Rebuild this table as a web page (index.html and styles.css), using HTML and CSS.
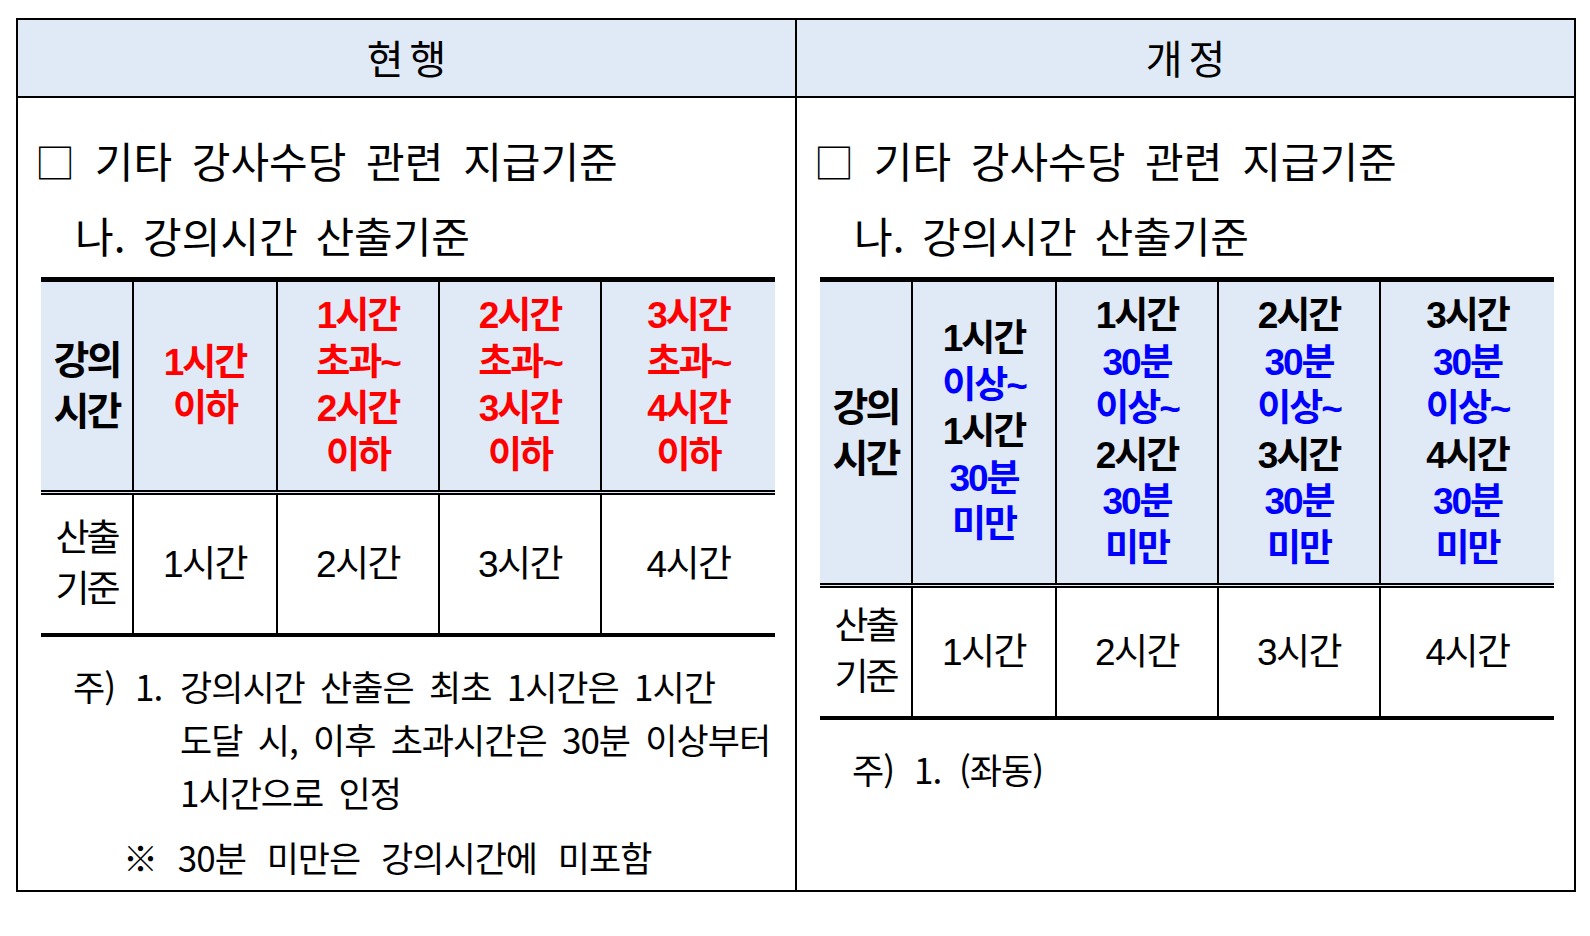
FILE: index.html
```html
<!DOCTYPE html>
<html lang="ko">
<head>
<meta charset="utf-8">
<title>강사수당 지급기준 비교</title>
<link rel="stylesheet" href="styles.css">
</head>
<body>
<div class="frame">
  <div class="head">현행</div>
  <div class="head">개정</div>

  <div class="panel">
    <div class="intro"><span class="box">□</span> 기타 강사수당 관련 지급기준</div>
    <div class="intro sub">나. 강의시간 산출기준</div>
    <table class="tbl">
      <colgroup><col class="c1"><col class="c2"><col class="c3"><col class="c4"><col class="c5"></colgroup>
      <tr class="hrow">
        <td class="lab"><div class="ln">강의</div><div class="ln">시간</div></td>
        <td class="red"><div class="ln">1시간</div><div class="ln">이하</div></td>
        <td class="red"><div class="ln">1시간</div><div class="ln">초과~</div><div class="ln">2시간</div><div class="ln">이하</div></td>
        <td class="red"><div class="ln">2시간</div><div class="ln">초과~</div><div class="ln">3시간</div><div class="ln">이하</div></td>
        <td class="red"><div class="ln">3시간</div><div class="ln">초과~</div><div class="ln">4시간</div><div class="ln">이하</div></td>
      </tr>
      <tr class="brow brow-l">
        <td class="lab2"><div class="ln">산출</div><div class="ln">기준</div></td>
        <td>1시간</td>
        <td>2시간</td>
        <td>3시간</td>
        <td>4시간</td>
      </tr>
    </table>
    <div class="note">
      <div class="note-line"><span class="nk">주)</span><span class="nn">1.</span><div class="nt"><div class="nl">강의시간 산출은 최초 1시간은 1시간</div><div class="nl">도달 시, 이후 초과시간은 30분 이상부터</div><div class="nl">1시간으로 인정</div></div></div>
      <div class="note-ref">※ 30분 미만은 강의시간에 미포함</div>
    </div>
  </div>

  <div class="panel">
    <div class="intro"><span class="box">□</span> 기타 강사수당 관련 지급기준</div>
    <div class="intro sub">나. 강의시간 산출기준</div>
    <table class="tbl">
      <colgroup><col class="c1"><col class="c2"><col class="c3"><col class="c4"><col class="c5"></colgroup>
      <tr class="hrow">
        <td class="lab"><div class="ln">강의</div><div class="ln">시간</div></td>
        <td><div class="ln">1시간</div><div class="ln blue">이상~</div><div class="ln">1시간</div><div class="ln blue">30분</div><div class="ln blue">미만</div></td>
        <td><div class="ln">1시간</div><div class="ln blue">30분</div><div class="ln blue">이상~</div><div class="ln">2시간</div><div class="ln blue">30분</div><div class="ln blue">미만</div></td>
        <td><div class="ln">2시간</div><div class="ln blue">30분</div><div class="ln blue">이상~</div><div class="ln">3시간</div><div class="ln blue">30분</div><div class="ln blue">미만</div></td>
        <td><div class="ln">3시간</div><div class="ln blue">30분</div><div class="ln blue">이상~</div><div class="ln">4시간</div><div class="ln blue">30분</div><div class="ln blue">미만</div></td>
      </tr>
      <tr class="brow brow-r">
        <td class="lab2"><div class="ln">산출</div><div class="ln">기준</div></td>
        <td>1시간</td>
        <td>2시간</td>
        <td>3시간</td>
        <td>4시간</td>
      </tr>
    </table>
    <div class="note">
      <div class="note-line"><span class="nk">주)</span><span class="nn">1.</span><div class="nt"><div class="nl">(좌동)</div></div></div>
    </div>
  </div>
</div>
</body>
</html>
```
FILE: styles.css
```css
html, body {
  margin: 0;
  padding: 0;
  background: #ffffff;
}
body {
  padding: 18px 0 0 16px;
  font-family: "Noto Sans CJK KR", "Noto Sans", sans-serif;
  color: #000;
}
.frame {
  display: grid;
  grid-template-columns: 779px 779px;
  grid-template-rows: 78px 794px;
  width: 1560px;
  border-top: 2px solid #000;
  border-left: 2px solid #000;
  box-sizing: border-box;
}
.head, .panel {
  border-right: 2px solid #000;
  border-bottom: 2px solid #000;
  box-sizing: border-box;
}
.head {
  background: #e0eaf6;
  display: flex;
  align-items: center;
  justify-content: center;
  font-size: 40px;
  letter-spacing: 6px;
  padding-left: 6px;
  padding-bottom: 2px;
  line-height: 1;
}
.panel {
  padding: 24px 0 0 23px;
}
.intro {
  font-size: 42px;
  line-height: 75px;
  height: 75px;
  white-space: nowrap;
  letter-spacing: 0;
  word-spacing: 8px;
  margin-left: -6px;
}
.intro.sub {
  margin-left: 34px;
  word-spacing: 6px;
}
.box {
  font-size: 40px;
}
.tbl {
  margin-top: 5px;
  width: 734px;
  border-collapse: collapse;
  table-layout: fixed;
  border-top: 5px solid #000;
  border-bottom: 4px solid #000;
  font-family: "Liberation Sans", "Noto Sans CJK KR", sans-serif;
}
.c1 { width: 92px; }
.c2 { width: 144px; }
.c3 { width: 162px; }
.c4 { width: 162px; }
.c5 { width: 174px; }
.tbl td {
  text-align: center;
  vertical-align: middle;
  border-left: 2px solid #000;
  border-right: 2px solid #000;
  padding: 0;
  white-space: nowrap;
}
.tbl td:first-child { border-left: none; }
.tbl td:last-child { border-right: none; }
.ln {
  height: 46.5px;
  line-height: 46.5px;
}
.hrow td {
  background: #e0eaf6;
  font-weight: bold;
  font-size: 37px;
  letter-spacing: -2px;
  padding: 11px 0;
  border-bottom: 5px double #000;
}
.hrow td.lab {
  font-size: 39px;
  letter-spacing: -3px;
}
.hrow td.lab .ln,
.brow td.lab2 .ln {
  height: 51px;
  line-height: 51px;
}
.red { color: #ff0000; }
.blue { color: #0000ff; }
.brow td {
  font-size: 37px;
  line-height: 51px;
  letter-spacing: -1.5px;
}
.brow-l td { padding: 18px 0; }
.brow-r td { padding: 13px 0; }
.brow td.lab2 {
  font-size: 37px;
  letter-spacing: -3px;
}
.note {
  margin-top: 22px;
  padding-left: 32px;
  font-size: 35px;
  line-height: 53px;
  letter-spacing: -1px;
}
.note-line {
  display: flex;
  white-space: nowrap;
}
.nk { width: 62px; }
.nn { width: 45px; }
.nt { word-spacing: 6.5px; }
.nl {
  height: 53px;
}
.note-ref {
  margin-top: 12px;
  padding-left: 50px;
  word-spacing: 12px;
  white-space: nowrap;
}
```
